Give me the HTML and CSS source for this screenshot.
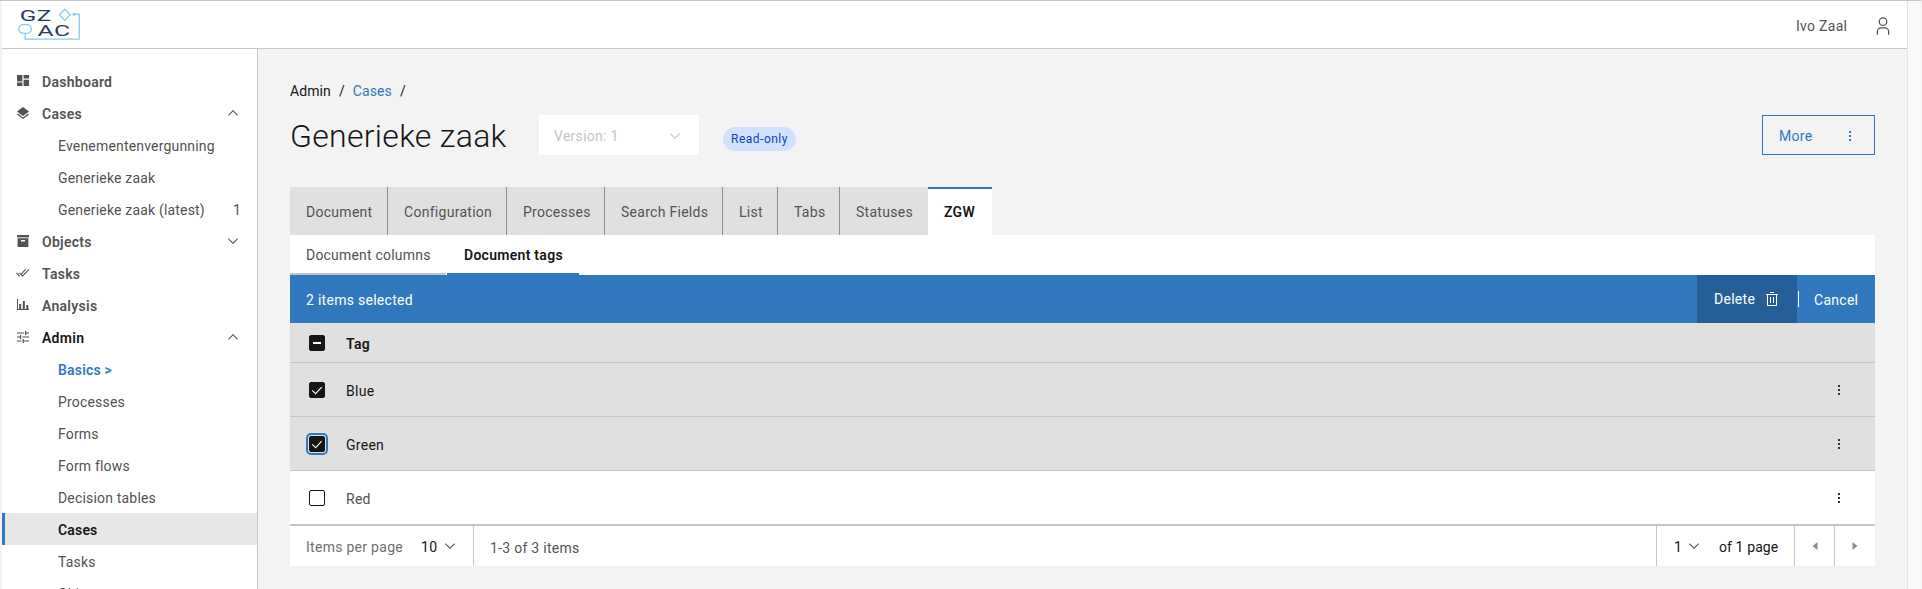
FILE: index.html
```html
<!DOCTYPE html>
<html lang="en">
<head>
<meta charset="utf-8">
<title>Generieke zaak</title>
<link rel="stylesheet" href="styles.css">
</head>
<body>
<svg class="defs" width="0" height="0">
  <symbol id="chev" viewBox="0 0 16 16"><path d="M8 11L3 6l.7-.7L8 9.6l4.3-4.3.7.7z"/></symbol>
  <symbol id="dots" viewBox="0 0 16 16"><path d="M7 3h2v2H7zM7 7h2v2H7zM7 11h2v2H7z"/></symbol>
  <symbol id="check" viewBox="0 0 16 16"><path d="M3.2 8.3l3.4 3.3 6.1-6.5" fill="none" stroke="#fff" stroke-width="1.1"/></symbol>
</svg>
<div class="app">
  <header class="header">
    <svg class="logo" width="64" height="34" viewBox="0 0 64 34">
      <g fill="none" stroke="#85cdf1" stroke-width="1.3">
        <path d="M47.8 1.2l5.3 5.6-5.3 5.6-5.3-5.6z"/>
        <path d="M57 6.2h5.3v25H8.1v-6"/>
        <rect x="1.7" y="16.7" width="12.6" height="8.6" rx="4.3"/>
      </g>
      <circle cx="57" cy="6.2" r="1.5" fill="#85cdf1"/>
      <g fill="#243b66" font-family="Roboto, sans-serif" font-size="15.5">
        <text x="2.8" y="12.5" textLength="32" lengthAdjust="spacingAndGlyphs">GZ</text>
        <text x="20.5" y="28" textLength="33" lengthAdjust="spacingAndGlyphs">AC</text>
      </g>
    </svg>
    <div class="user"><span>Ivo Zaal</span>
      <svg width="20" height="20" viewBox="0 0 32 32" fill="#525252"><path d="M16 4a5 5 0 1 1-5 5 5 5 0 0 1 5-5m0-2a7 7 0 1 0 7 7 7 7 0 0 0-7-7zM26 30h-2v-5a5 5 0 0 0-5-5h-6a5 5 0 0 0-5 5v5H6v-5a7 7 0 0 1 7-7h6a7 7 0 0 1 7 7z"/></svg>
    </div>
  </header>
  <div class="body">
    <nav class="nav">
      <a class="top"><svg class="ic" viewBox="0 0 12 12"><path d="M0 0h5.4v6.4H0zM0 7.6h5.4V11H0zM6.6 0H12v3.6H6.6zM6.6 4.8H12V11H6.6z"/></svg><span>Dashboard</span></a>
      <a class="top"><svg class="ic" viewBox="0 0 12 12"><path d="M6 0l6 4.5-6 4.6L0 4.5zM6 10.4l5-3.8 1 .8-6 4.6-6-4.6 1-.8z"/></svg><span>Cases</span><svg class="chev up"><use href="#chev"/></svg></a>
      <a class="sub"><span>Evenementenvergunning</span></a>
      <a class="sub"><span>Generieke zaak</span></a>
      <a class="sub"><span>Generieke zaak (latest)</span><b>1</b></a>
      <a class="top"><svg class="ic" viewBox="0 0 12 12"><path d="M0 0h12v2.4H0z"/><path fill-rule="evenodd" d="M.6 3.2h10.8V12H.6zM4 5v1.4h4V5z"/></svg><span>Objects</span><svg class="chev"><use href="#chev"/></svg></a>
      <a class="top"><svg class="ic wide" viewBox="0 0 14 12"><path d="M.5 6l3.3 3.3M3.6 6l3 3L13 2.4M5.4 6.8L9.6 2.4" fill="none" stroke="#525252" stroke-width="1.1"/></svg><span>Tasks</span></a>
      <a class="top"><svg class="ic" viewBox="0 0 12 12"><path d="M0 0h1v10h11v1H0zM2.2 5h2v5h-2zM5.8 2h2v8h-2zM9.3 6h2v4h-2z"/></svg><span>Analysis</span></a>
      <a class="top dark"><svg class="ic" viewBox="0 0 12 12"><path d="M0 1.4h7v1.2H0zM8 0h1.2v1.4H12v1.2H9.2V4H8zM0 5.4h3V4h1.2v4H3V6.6H0zM5.3 5.4H12v1.2H5.3zM0 9.4h4.5v1.2H0zM5.6 8h1.2v1.4H12v1.2H6.8V12H5.6z"/></svg><span>Admin</span><svg class="chev up"><use href="#chev"/></svg></a>
      <a class="sub basics"><span>Basics &gt;</span></a>
      <a class="sub"><span>Processes</span></a>
      <a class="sub"><span>Forms</span></a>
      <a class="sub"><span>Form flows</span></a>
      <a class="sub"><span>Decision tables</span></a>
      <a class="sub active"><span>Cases</span></a>
      <a class="sub"><span>Tasks</span></a>
      <a class="sub"><span>Object management</span></a>
    </nav>
    <main class="main">
      <div class="crumbs"><span>Admin</span><i>/</i><a>Cases</a><i>/</i></div>
      <div class="titlebar">
        <h1>Generieke zaak</h1>
        <div class="version"><span>Version: 1</span><svg class="chev"><use href="#chev"/></svg></div>
        <span class="tag">Read-only</span>
        <button class="more"><span>More</span><svg class="dots"><use href="#dots"/></svg></button>
      </div>
      <div class="tabs">
        <div class="t1">Document</div><div class="t2">Configuration</div><div class="t3">Processes</div><div class="t4">Search Fields</div><div class="t5">List</div><div class="t6">Tabs</div><div class="t7">Statuses</div><div class="t8">ZGW</div>
      </div>
      <div class="subtabs"><div class="s1">Document columns</div><div class="s2">Document tags</div></div>
      <div class="batch"><span>2 items selected</span>
        <div class="delete"><span>Delete</span><svg width="16" height="16" viewBox="0 0 16 16" fill="#fff"><path d="M6 6h1v6H6zM9 6h1v6H9zM2 3v1h1v10a1 1 0 0 0 1 1h8a1 1 0 0 0 1-1V4h1V3zm2 11V4h8v10zM6 1h4v1H6z"/></svg></div>
        <div class="cancel">Cancel</div>
      </div>
      <div class="row head"><i class="box on"><em></em></i><b>Tag</b></div>
      <div class="row sel"><i class="box on"><svg><use href="#check"/></svg></i><span>Blue</span><svg class="dots"><use href="#dots"/></svg></div>
      <div class="row sel"><i class="box on focus"><svg><use href="#check"/></svg></i><span>Green</span><svg class="dots"><use href="#dots"/></svg></div>
      <div class="row"><i class="box"></i><span>Red</span><svg class="dots"><use href="#dots"/></svg></div>
      <div class="pager">
        <div class="size"><span>Items per page</span><b>10</b><svg class="chev"><use href="#chev"/></svg></div>
        <span class="range">1-3 of 3 items</span>
        <div class="page"><b>1</b><svg class="chev"><use href="#chev"/></svg><span>of 1 page</span></div>
        <div class="arrow"><svg width="6" height="8"><path d="M5.5 0v8L.5 4z"/></svg></div>
        <div class="arrow"><svg width="6" height="8"><path d="M.5 0v8l5-4z"/></svg></div>
      </div>
    </main>
  </div>
</div>
</body>
</html>
```
FILE: styles.css
```css
* { box-sizing: border-box; }
body {
  margin: 0; height: 589px; overflow: hidden; background: #f9f9f9;
  border-top: 1px solid #c6c6c6; border-right: 1px solid #f0f0f0;
  font: 14px/20px Roboto, sans-serif; letter-spacing: .28px; color: #525252;
}
.defs { position: absolute; }
.app { width: 1908px; height: 588px; padding-left: 2px; background: #f3f3f3; border-right: 1px solid #e4e4e4; overflow: hidden; }
.header { height: 48px; background: #fff; border-bottom: 1px solid #c6c6c6; display: flex; justify-content: space-between; padding: 7px 14px 0 15px; }
.logo { display: block; overflow: visible; }
.user { display: flex; gap: 26px; height: 34px; padding-top: 1px; align-items: center; }
.user span { width: 51px; white-space: nowrap; }
.body { display: flex; height: 540px; }
.nav { width: 256px; flex: none; background: #fff; border-right: 1px solid #c6c6c6; padding-top: 16px; }
.nav a { display: flex; align-items: center; height: 32px; padding: 2px 16px 0 15px; white-space: nowrap; }
.nav .top { font-weight: 600; }
.nav a.dark { color: #161616; }
.nav .sub { padding-left: 56px; letter-spacing: .18px; }
.nav .sub b { margin-left: auto; font-weight: 400; font-size: 14px; }
.nav .basics { color: #3278be; font-weight: 600; }
.nav .active { background: #e8e8e8; border-left: 3px solid #3278be; padding-left: 53px; color: #161616; font-weight: 600; }
.ic { width: 12px; height: 12px; margin: 0 13px 2px 0; fill: #525252; }
.ic.wide { width: 14px; margin-left: -1px; margin-right: 12px; }
.chev { width: 16px; height: 16px; fill: #525252; flex: none; }
.nav .chev { margin-left: auto; margin-bottom: 2px; }
.up { transform: rotate(180deg); }
.main { flex: 1; padding: 32px 32px 0; }
.crumbs { display: flex; height: 20px; color: #161616; gap: 8px; letter-spacing: .1px; }
.crumbs i { font-style: normal; }
.crumbs a { color: #3278be; }
.titlebar { display: flex; height: 40px; margin: 14px 0 32px; }
h1 { margin: 0; width: 249px; flex: none; font-size: 32px; line-height: 42px; font-weight: 300; letter-spacing: .3px; color: #161616; white-space: nowrap; }
.version { width: 160px; background: #fff; display: flex; align-items: center; justify-content: space-between; padding: 2px 16px 0 15px; color: #c6c6c6; }
.version .chev { fill: #c6c6c6; }
.tag { margin: 12px 0 0 24px; width: 73px; height: 24px; line-height: 25px; border-radius: 12px; background: #d0e2ff; color: #0f43ba; font-size: 12px; letter-spacing: .5px; text-align: center; }
.more { margin-left: auto; width: 113px; border: 1px solid #3278be; background: none; color: #3278be; font: inherit; letter-spacing: inherit; display: flex; align-items: center; justify-content: space-between; padding: 1px 16px 0 16px; }
.more .dots { fill: #3278be; }
.dots { width: 16px; height: 16px; fill: #333; }
.tabs { display: flex; height: 48px; }
.tabs div { background: #e0e0e0; padding: 15px 0 0 16px; border-left: 1px solid #8d8d8d; white-space: nowrap; }
.tabs .t1 { width: 97px; border: 0; }
.t2 { width: 119px; }
.t3 { width: 98px; }
.t4 { width: 118px; }
.t5 { width: 55px; }
.t6 { width: 62px; }
.t7 { width: 89px; }
.tabs .t8 { width: 64px; background: #fff; border: 0; border-top: 2px solid #3278be; padding-top: 13px; color: #161616; font-weight: 600; }
.subtabs { display: flex; gap: 1px; height: 40px; background: #fff; }
.subtabs div { padding: 10px 0 0 16px; border-bottom: 2px solid #c6c6c6; white-space: nowrap; }
.s1 { width: 156px; letter-spacing: .2px; }
.subtabs .s2 { width: 132px; border-color: #3278be; color: #161616; font-weight: 600; padding-left: 17px; }
.batch { display: flex; height: 48px; line-height: 50px; padding-left: 16px; background: #3278be; color: #fff; }
.delete { display: flex; gap: 8px; align-items: center; margin-left: auto; width: 100px; padding-left: 17px; background: #265f98; }
.delete span { width: 42px; }
.cancel { width: 77px; padding-left: 15px; margin: 16px 0 0 1px; height: 16px; line-height: 18px; border-left: 1px solid #fff; }
.row { display: flex; align-items: center; height: 54px; background: #fff; border-bottom: 1px solid #c6c6c6; padding: 0 28px 0 19px; }
.row span, .row b { margin-left: 21px; padding-top: 2px; }
.row b { font-weight: 600; }
.row .dots { margin-left: auto; }
.sel { background: #e0e0e0; color: #161616; }
.head { height: 40px; background: #e0e0e0; color: #161616; }
.box { width: 16px; height: 16px; border: 1px solid #161616; border-radius: 2px; display: flex; }
.box svg { width: 16px; height: 16px; margin: -1px; flex: none; }
.on { background: #161616; }
.box em { width: 8px; height: 2px; background: #fff; margin: 6px 3px; }
.focus { box-shadow: 0 0 0 1px #e0e0e0, 0 0 0 3px #3278be; }
.pager { display: flex; height: 41px; background: #fff; border-top: 1px solid #c6c6c6; line-height: 42px; }
.pager b { font-weight: 400; color: #161616; }
.pager b, .pager span { padding-top: 1px; }
.size { display: flex; align-items: center; width: 184px; padding-left: 16px; border-right: 1px solid #c6c6c6; color: #6f6f6f; }
.size span { width: 115px; }
.size b { width: 21px; }
.range { margin-left: 16px; }
.page { display: flex; align-items: center; margin-left: auto; width: 138px; padding-left: 17px; border-left: 1px solid #c6c6c6; color: #161616; }
.page b { width: 12px; }
.page span { margin-left: 17px; letter-spacing: .1px; }
.arrow { width: 40px; border-left: 1px solid #c6c6c6; display: flex; align-items: center; justify-content: center; fill: #8d8d8d; }
.arrow + .arrow { width: 41px; }
```
